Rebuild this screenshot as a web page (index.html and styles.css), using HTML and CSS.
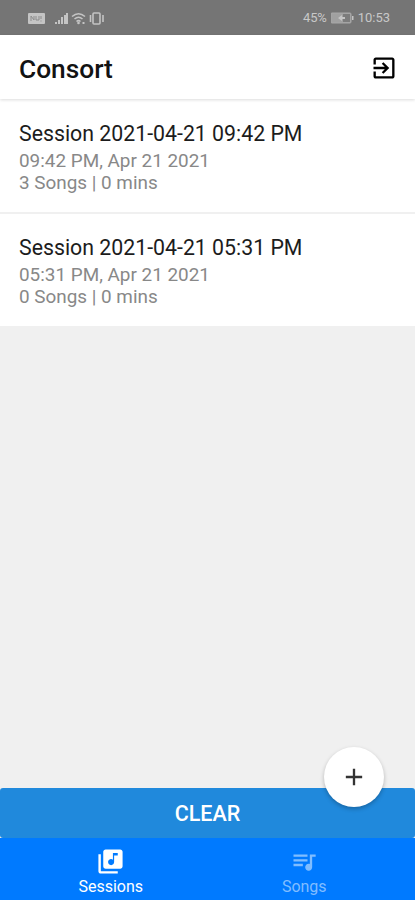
FILE: index.html
```html
<!DOCTYPE html>
<html lang="en">
<head>
    <meta charset="utf-8">
    <title>Consort</title>
    <link rel="stylesheet" href="styles.css">
</head>
<body>
    <div class="status-bar">
        <svg class="status-icons" width="80" height="16" viewBox="0 0 80 16">
            <rect x="0" y="3" width="17" height="11" rx="1"/>
            <path class="cut" d="M3 6v5M3 6l3 4V6M8 6v4h3V6M13 6v3M13 10.5v1"/>
            <path d="M27 14h2v-2h-2zM30 14h2v-4h-2zM33 14h2V7h-2zM36 14h2V5h-2zM38 14h2V3h-2z"/>
            <path class="line" d="M44 6.500q6.500-5.500 13 0M46.500 9q4-3.500 8 0M48.500 11.500q2-1.700 4 0"/>
            <circle cx="50.500" cy="13" r="1.300"/>
            <path d="M54.500 12h2v2h-2z"/>
            <rect class="line" x="65" y="3" width="7" height="11" rx="1"/>
            <path class="line" d="M62.500 5v7M75 5v7"/>
        </svg>
        <div class="status-right">
            <span class="percent">45%</span>
            <svg width="23" height="12" viewBox="0 0 23 12">
                <rect class="battery" x="0" y="1" width="20" height="10" rx="1"/>
                <path d="M12 2h7v8h-7z" class="empty"/>
                <path d="M7 6l4-3v2h3v2h-3v2z"/>
                <path d="M21 4h1.500v4H21z"/>
            </svg>
            <span class="time">10:53</span>
        </div>
    </div>

    <div class="header">
        <h1>Consort</h1>
        <svg class="exit-icon" width="28" height="28" viewBox="0 0 24 24">
            <path d="M10.090 15.590L11.500 17l5-5-5-5-1.410 1.410L12.670 11H3v2h9.670l-2.580 2.590zM19 3H5c-1.110 0-2 .9-2 2v4h2V5h14v14H5v-4H3v4c0 1.100.890 2 2 2h14c1.100 0 2-.9 2-2V5c0-1.100-.9-2-2-2z"/>
        </svg>
    </div>

    <div class="session-list">
        <div class="session">
            <div class="session-title">Session 2021-04-21 09:42 PM</div>
            <div class="session-info">09:42 PM, Apr 21 2021</div>
            <div class="session-info">3 Songs | 0 mins</div>
        </div>
        <div class="session">
            <div class="session-title">Session 2021-04-21 05:31 PM</div>
            <div class="session-info">05:31 PM, Apr 21 2021</div>
            <div class="session-info">0 Songs | 0 mins</div>
        </div>
    </div>

    <div class="footer">
        <div class="add-button">
            <svg width="28" height="28" viewBox="0 0 24 24">
                <path d="M19 13h-6v6h-2v-6H5v-2h6V5h2v6h6z"/>
            </svg>
        </div>
        <div class="clear-wrap">
            <div class="clear-button">CLEAR</div>
        </div>
        <div class="tabs">
            <div class="tab active">
                <svg width="29" height="29" viewBox="0 0 24 24">
                    <path d="M20 2H8c-1.100 0-2 .9-2 2v12c0 1.100.9 2 2 2h12c1.100 0 2-.9 2-2V4c0-1.100-.9-2-2-2zm-2 5h-3v5.500c0 1.380-1.120 2.500-2.500 2.500S10 13.880 10 12.500s1.120-2.500 2.500-2.500c.570 0 1.080.190 1.500.510V5h4v2zM4 6H2v14c0 1.100.9 2 2 2h14v-2H4V6z"/>
                </svg>
                <span>Sessions</span>
            </div>
            <div class="tab">
                <svg width="28" height="29" viewBox="0 0 24 24">
                    <path d="M15 6H3v2h12V6zm0 4H3v2h12v-2zM3 16h8v-2H3v2zM17 6v8.180c-.310-.110-.650-.180-1-.180-1.660 0-3 1.340-3 3s1.340 3 3 3 3-1.340 3-3V8h3V6h-5z"/>
                </svg>
                <span>Songs</span>
            </div>
        </div>
    </div>
</body>
</html>
```
FILE: styles.css
```css
body {
    margin: 0;
    height: 900px;
    display: flex;
    flex-direction: column;
    background-color: #f0f0f0;
    font-family: Roboto, sans-serif;
    overflow: hidden;
}

.status-bar {
    height: 35px;
    box-sizing: border-box;
    padding: 0 25px 0 28px;
    display: flex;
    align-items: center;
    justify-content: space-between;
    background-color: #757575;
    color: #c8c8c8;
    fill: #c4c4c4;
}

.status-icons .line,
.status-icons .cut {
    fill: none;
    stroke: #c4c4c4;
    stroke-width: 1.6;
}

.status-icons .cut {
    stroke: #8c8c8c;
    stroke-width: 1;
}

.status-right {
    display: flex;
    align-items: center;
    font-size: 13px;
}

.status-right .percent {
    letter-spacing: -0.2px;
}

.status-right svg {
    margin: 0 4px 0 4px;
}

.battery {
    fill: #a0a0a0;
    stroke: #a8a8a8;
}

.empty {
    fill: #7c7c7c;
}

.header {
    height: 64px;
    box-sizing: border-box;
    padding: 2px 17px 0 19px;
    display: flex;
    align-items: center;
    justify-content: space-between;
    background-color: #fff;
    box-shadow: 0 1px 3px rgba(0, 0, 0, 0.14);
    position: relative;
}

.header h1 {
    margin: 1px 0 0;
    font-size: 26.3px;
    font-weight: 500;
    color: #121212;
}

.session {
    height: 112px;
    box-sizing: border-box;
    padding: 19px 19px 0;
    background-color: #fff;
}

.session:first-child {
    height: 115px;
    padding-top: 20px;
    border-bottom: 2px solid #f0f0f0;
}

.session-title {
    margin-bottom: 1px;
    font-size: 21.3px;
    line-height: 30px;
    color: #1c1c1c;
}

.session-info {
    font-size: 18.9px;
    line-height: 22px;
    color: #888;
}

.footer {
    margin-top: auto;
    position: relative;
}

/* floats over the top edge of the clear button */
.add-button {
    position: absolute;
    top: -41px;
    right: 31px;
    width: 60px;
    height: 60px;
    border-radius: 50%;
    background-color: #fff;
    box-shadow: 0 2px 4px rgba(0, 0, 0, 0.25);
    display: flex;
    align-items: center;
    justify-content: center;
    fill: #333;
}

.clear-wrap {
    background-color: #f0f0f0;
}

.clear-button {
    height: 50px;
    line-height: 52px;
    border-radius: 3px;
    background-color: #2089dc;
    color: #fff;
    font-size: 21.5px;
    font-weight: 500;
    text-align: center;
}

.tabs {
    height: 62px;
    box-sizing: border-box;
    padding: 0 14px;
    display: flex;
    background-color: #007aff;
}

.tab {
    flex: 1;
    padding-top: 9px;
    display: flex;
    flex-direction: column;
    align-items: center;
    font-size: 16px;
    line-height: 22px;
    color: #80bdff;
    fill: #80bdff;
}

.tab.active {
    color: #fff;
    fill: #fff;
}
```
